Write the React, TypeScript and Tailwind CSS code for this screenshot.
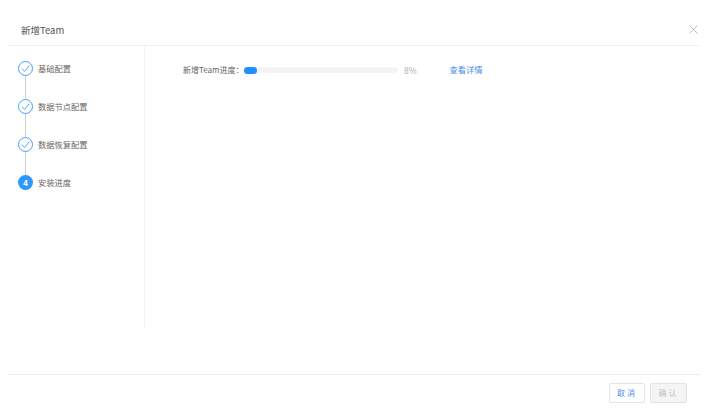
import React from 'react';

const font = "font-['Noto_Sans_CJK_SC','Noto_Sans',sans-serif]";

const steps = [
  { title: '基础配置', done: true },
  { title: '数据节点配置', done: true },
  { title: '数据恢复配置', done: true },
  { title: '安装进度', done: false },
];

const Check = () => (
  <svg width="9" height="9" viewBox="0 0 10 10" fill="none" stroke="#3f9dfd" strokeWidth="1">
    <path d="M1 5.2 L4 8.2 L9.2 1.8" />
  </svg>
);

const App = () => {
  return (
    <div className={`${font} w-[705px] h-[415px] bg-white flex flex-col pl-2 pr-[5px] overflow-hidden`}>
      <div className="h-[46px] shrink-0 flex items-center justify-between border-b border-[#f0f0f0] pl-[13px] pr-[2px] pt-[17px]">
        <span className="text-[9.5px] leading-none text-[#555]">新增Team</span>
        <svg className="mb-[4px]" width="9" height="9" viewBox="0 0 9 9" stroke="#a8a8a8" strokeWidth="0.8">
          <path d="M0.5 0.5 L8.5 8.5 M8.5 0.5 L0.5 8.5" />
        </svg>
      </div>

      <div className="h-[282px] shrink-0 flex">
        <div className="w-[137px] shrink-0 border-r border-[#f2f2f2] pl-[10px] pt-[15px]">
          {steps.map((step, index) => (
            <div key={index} className="flex h-[38px]">
              <div className="flex flex-col items-center w-[15px]">
                {step.done ? (
                  <div className="w-[15px] h-[15px] shrink-0 rounded-full border-[1.5px] border-[#40a0ff] flex items-center justify-center">
                    <Check />
                  </div>
                ) : (
                  <div className="w-[15px] h-[15px] shrink-0 rounded-full bg-[#2e97fd] flex items-center justify-center text-white text-[8px] font-bold leading-none">
                    4
                  </div>
                )}
                {index < steps.length - 1 && <div className="w-px flex-1 bg-[#d0d0d0]" />}
              </div>
              <span className="ml-[5px] text-[8.25px] leading-[15px] text-[#666]">{step.title}</span>
            </div>
          ))}
        </div>

        <div className="flex-1 pl-[38px] pt-[17px]">
          <div className="flex items-center h-[14px] text-[8px]">
            <span className="text-[#666] w-[61px] whitespace-nowrap">新增Team进度：</span>
            <div className="w-[154px] h-[6px] rounded-full bg-[#f4f4f4]">
              <div className="h-[7px] w-[13px] rounded-full bg-[#1f90fd]" />
            </div>
            <span className="ml-[6px] text-[#aaa] text-[8.5px]">8%</span>
            <span className="ml-[33px] mb-[1px] text-[8.25px] text-[#4a90e8]">查看详情</span>
          </div>
        </div>
      </div>

      <div className="mt-[46px] flex-1 border-t border-[#ececec] flex justify-end gap-[5px] pt-[8px] pr-[13px]">
        <button className="w-[36px] h-[20px] border border-[#e4e4e4] rounded-[2px] bg-white text-[8px] leading-none tracking-[2px] text-[#4a90e8]">
          取消
        </button>
        <button className="w-[37px] h-[20px] border border-[#e4e4e4] rounded-[2px] bg-[#f5f5f5] text-[8px] leading-none tracking-[2px] text-[#c0c0c0]">
          确认
        </button>
      </div>
    </div>
  );
};

export default App;
